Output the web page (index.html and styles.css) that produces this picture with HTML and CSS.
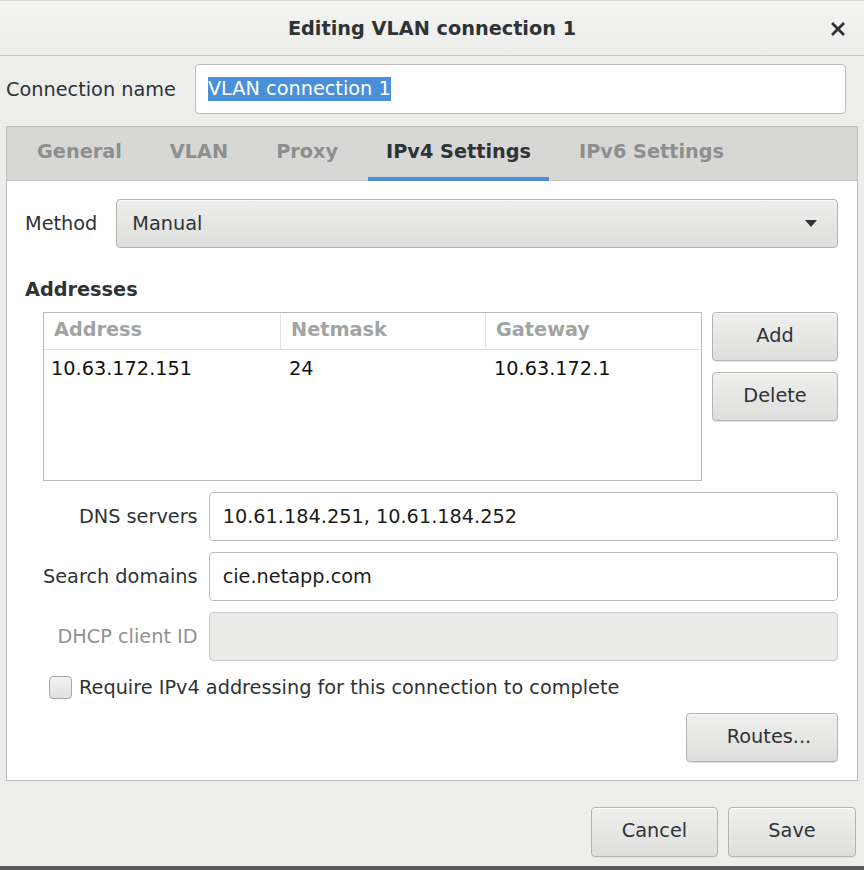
FILE: index.html
```html
<!DOCTYPE html>
<html>
<head>
<meta charset="utf-8">
<link rel="stylesheet" href="styles.css">
</head>
<body>
<div class="window">
  <div class="titlebar">
    <span class="title">Editing VLAN connection 1</span>
    <span class="close"><svg width="14" height="14" viewBox="0 0 14 14"><path d="M2 2 L12 12 M12 2 L2 12" stroke="#2e3436" stroke-width="2.8" stroke-linecap="square"/></svg></span>
  </div>
  <div class="body">
    <div class="namerow">
      <span class="label">Connection name</span>
      <div class="entry name-entry"><span class="sel">VLAN connection 1</span></div>
    </div>
    <div class="notebook">
      <div class="tabs">
        <span class="tab">General</span>
        <span class="tab">VLAN</span>
        <span class="tab">Proxy</span>
        <span class="tab active">IPv4 Settings</span>
        <span class="tab">IPv6 Settings</span>
      </div>
      <div class="panel">
        <div class="method-row">
          <span class="label">Method</span>
          <div class="combo">
            <span>Manual</span>
            <svg class="arrow" width="12" height="7" viewBox="0 0 12 7"><path d="M0 0 H12 L6 7 Z" fill="#2e3436"/></svg>
          </div>
        </div>
        <div class="section-title">Addresses</div>
        <div class="addr-row">
          <div class="table">
            <div class="thead">
              <span class="c1">Address</span>
              <span class="c2">Netmask</span>
              <span class="c3">Gateway</span>
            </div>
            <div class="trow">
              <span class="c1">10.63.172.151</span>
              <span class="c2">24</span>
              <span class="c3">10.63.172.1</span>
            </div>
          </div>
          <div class="side-buttons">
            <button class="btn">Add</button>
            <button class="btn">Delete</button>
          </div>
        </div>
        <div class="form-grid">
          <span class="flabel">DNS servers</span>
          <div class="entry">10.61.184.251, 10.61.184.252</div>
          <span class="flabel">Search domains</span>
          <div class="entry">cie.netapp.com</div>
          <span class="flabel disabled">DHCP client ID</span>
          <div class="entry disabled-entry"></div>
        </div>
        <div class="check-row">
          <span class="checkbox"></span>
          <span class="check-text">Require IPv4 addressing for this connection to complete</span>
        </div>
        <div class="routes-row">
          <button class="btn routes">Routes...</button>
        </div>
      </div>
    </div>
    <div class="actions">
      <button class="btn cancel">Cancel</button>
      <button class="btn save">Save</button>
    </div>
  </div>
  <div class="bottom-edge"></div>
</div>
</body>
</html>
```
FILE: styles.css
```css
* { box-sizing: border-box; }
html, body { margin: 0; padding: 0; }
body {
  width: 864px;
  height: 870px;
  overflow: hidden;
  background: #ededec;
  font-family: "DejaVu Sans", sans-serif;
  font-size: 19.3px;
  color: #2e3436;
}
.window {
  width: 864px;
  height: 870px;
  display: flex;
  flex-direction: column;
  background: #ededec;
}
.titlebar {
  height: 56px;
  flex: none;
  display: flex;
  align-items: center;
  justify-content: center;
  position: relative;
  background: linear-gradient(#f4f4f3, #ececeb);
  border-bottom: 1px solid #c6c6c3;
  border-top: 1px solid #d8d8d6;
}
.title {
  font-weight: bold;
  color: #2e3436;
}
.close {
  position: absolute;
  right: 19px;
  top: 21px;
  width: 14px;
  height: 14px;
  display: flex;
}
.body {
  flex: 1;
  display: flex;
  flex-direction: column;
}
.namerow {
  display: flex;
  align-items: center;
  padding: 8px 18px 0 6px;
  gap: 19px;
}
.label { white-space: nowrap; }
.entry {
  height: 49px;
  background: #ffffff;
  border: 1px solid #bcbcb9;
  border-radius: 4px;
  display: flex;
  align-items: center;
  padding: 0 13px;
  color: #1c1c1c;
  white-space: nowrap;
}
.name-entry {
  flex: 1;
  height: 50px;
  padding-left: 12px;
}
.sel {
  background: #4a90d9;
  color: #ffffff;
  line-height: 24px;
}
.notebook {
  margin: 12px 6px 0 6px;
  border: 1px solid #bdbdbb;
  background: #ffffff;
  display: flex;
  flex-direction: column;
}
.tabs {
  height: 54px;
  background: #d7d7d6;
  border-bottom: 1px solid #c4c4c2;
  display: flex;
  align-items: stretch;
  padding-left: 12px;
  gap: 12px;
}
.tab {
  padding: 0 18px 2px 18px;
  display: flex;
  align-items: center;
  font-weight: bold;
  color: #8d8f8f;
  border-bottom: 4px solid transparent;
  margin-bottom: -1px;
}
.tab.active {
  color: #2e3436;
  border-bottom-color: #4a90d9;
}
.panel {
  padding: 18px 19px 18px 18px;
  display: flex;
  flex-direction: column;
}
.method-row {
  display: flex;
  align-items: center;
  gap: 19px;
}
.combo {
  flex: 1;
  height: 49px;
  border: 1px solid #b4b4b1;
  border-radius: 4px;
  background: linear-gradient(#ededec, #dfdfdd);
  display: flex;
  align-items: center;
  justify-content: space-between;
  padding: 0 20px 0 15px;
  box-shadow: inset 0 1px #f8f8f7;
}
.arrow { display: block; }
.section-title {
  font-weight: bold;
  margin-top: 30px;
  line-height: 24px;
}
.addr-row {
  display: flex;
  margin-top: 10px;
  margin-left: 18px;
  gap: 10px;
}
.table {
  flex: 1;
  height: 169px;
  border: 1px solid #bcbcb9;
  background: #ffffff;
}
.thead, .trow {
  display: grid;
  grid-template-columns: 237px 205px 1fr;
}
.thead {
  height: 37px;
  border-bottom: 1px solid #e2e2e0;
  font-weight: bold;
  color: #a2a4a4;
}
.thead span {
  display: flex;
  align-items: center;
  padding-left: 10px;
  padding-bottom: 3px;
  border-right: 1px solid #e2e2e0;
}
.thead span.c3 { border-right: none; }
.trow {
  height: 36px;
  color: #111111;
}
.trow span {
  display: flex;
  align-items: center;
  padding-left: 7px;
}
.trow span.c2, .trow span.c3 { padding-left: 8px; }
.side-buttons {
  width: 126px;
  display: flex;
  flex-direction: column;
  gap: 11px;
}
.btn {
  font-family: "DejaVu Sans", sans-serif;
  font-size: 19.3px;
  color: #2e3436;
  height: 49px;
  border: 1px solid #b4b4b1;
  border-radius: 4px;
  background: linear-gradient(#efefee, #dededc);
  box-shadow: inset 0 1px #fafafa, 0 1px #e4e4e2;
  padding: 0 0 3px 0;
  margin: 0;
}
.form-grid {
  display: grid;
  grid-template-columns: auto 1fr;
  column-gap: 11px;
  row-gap: 11px;
  margin-top: 11px;
  margin-left: 18px;
  align-items: center;
}
.flabel {
  text-align: right;
  white-space: nowrap;
}
.flabel.disabled { color: #8f9292; }
.disabled-entry {
  background: #ebebea;
  border-color: #cbcbc9;
}
.check-row {
  display: flex;
  align-items: center;
  margin-top: 15px;
  margin-left: 24px;
  gap: 7px;
}
.checkbox {
  width: 23px;
  height: 23px;
  border: 1px solid #a9a9a6;
  border-radius: 4px;
  background: linear-gradient(#f2f2f1, #e0e0de);
}
.check-text { line-height: 23px; }
.routes-row {
  display: flex;
  justify-content: flex-end;
  margin-top: 14px;
}
.routes { width: 152px; padding-left: 14px; }
.actions {
  display: flex;
  justify-content: flex-end;
  gap: 10px;
  padding: 26px 8px 0 0;
}
.cancel { width: 127px; height: 50px; }
.save { width: 128px; height: 50px; }
.bottom-edge {
  height: 4px;
  margin-top: auto;
  background: #5a5a5a;
}
```
